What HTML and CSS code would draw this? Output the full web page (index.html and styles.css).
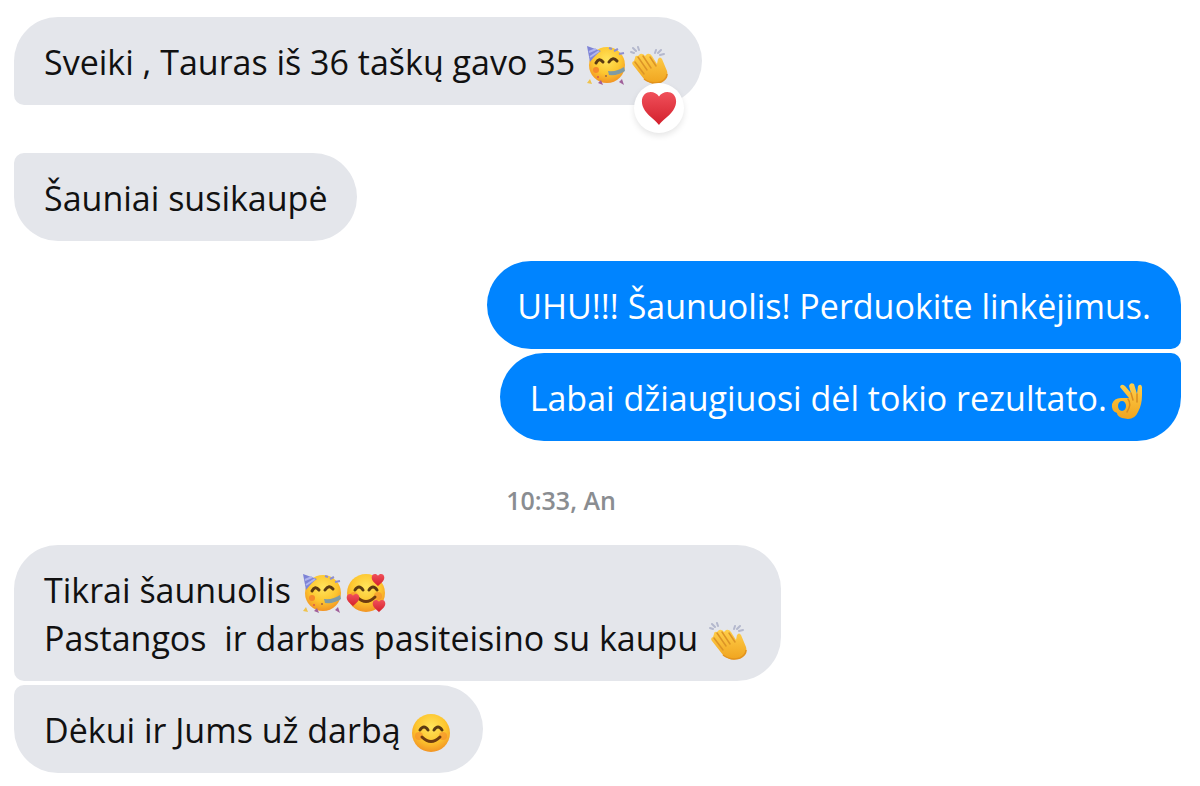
FILE: index.html
```
<!DOCTYPE html>
<html lang="lt">
<head>
    <meta charset="UTF-8">
    <meta name="viewport" content="width=device-width, initial-scale=1.0">
    <title>Žinutės</title>
    <link rel="stylesheet" href="styles.css">
</head>
<body>

<svg class="sprite" aria-hidden="true">
    <defs>
        <radialGradient id="face" cx="50%" cy="35%" r="65%">
            <stop offset="0" stop-color="#ffe45c"/>
            <stop offset="0.6" stop-color="#fdc62f"/>
            <stop offset="1" stop-color="#f29423"/>
        </radialGradient>
        <linearGradient id="hand" x1="0" y1="0" x2="0" y2="1">
            <stop offset="0" stop-color="#ffcf4a"/>
            <stop offset="1" stop-color="#f0a41f"/>
        </linearGradient>
        <linearGradient id="red" x1="0" y1="0" x2="0" y2="1">
            <stop offset="0" stop-color="#f0505a"/>
            <stop offset="1" stop-color="#d3202c"/>
        </linearGradient>
    </defs>

    <symbol id="party" viewBox="0 0 40 40">
        <circle cx="21" cy="20" r="18" fill="url(#face)"/>
        <path d="M1 1 L15 6 Q10 9 4 17 Z" fill="#7d83d6"/>
        <path d="M3 7 L10 4 M4 12 L13 6" stroke="#b0b5ee" stroke-width="2"/>
        <path d="M10 18 Q13 12 17 17 M23 17 Q27 11 31 16" fill="none" stroke="#5b3a12" stroke-width="3" stroke-linecap="round"/>
        <circle cx="10" cy="25" r="3" fill="#f58a2c"/>
        <path d="M22 26 Q31 27 38 22 L39 26 Q32 31 23 30 Z" fill="#7f9ba5"/>
        <path d="M28 6 l4 -2 M33 9 l5 -1 M23 3 l3 1" stroke="#8e8fd0" stroke-width="2"/>
        <path d="M1 38 l3 -4 2 5z" fill="#efc34d"/>
        <path d="M12 38 l3 -3 2 5z M33 37 l3 -3 2 6z" fill="#a0609a"/>
        <circle cx="12" cy="32" r="1" fill="#d8574e"/>
        <circle cx="20" cy="31" r="1" fill="#a06442"/>
    </symbol>

    <symbol id="clap" viewBox="0 0 40 40">
        <path d="M3 20 Q1 17 4 16 L5 13 Q5 10 8 11 L10 9 Q13 8 15 11 L17 9 Q20 8 22 11 L27 19 L28 14 Q30 11 32 14 L37 26 Q39 34 31 37 Q22 41 14 34 Z" fill="url(#hand)"/>
        <path d="M8 12 L17 25 M13 11 L21 23 M5 17 L14 29 M20 12 L26 21" fill="none" stroke="#dc9426" stroke-width="1.5" stroke-linecap="round"/>
        <path d="M14 34 Q22 40 31 37 Q37 34 37 29" fill="none" stroke="#e3931d" stroke-width="1.5"/>
        <path d="M1 7 l3 1 M3 3 l3 3 M8 2 l1 3 M26 5 l-1 3 M31 5 l-3 3 M34 9 l-4 1" stroke="#b4b8cd" stroke-width="2" stroke-linecap="round"/>
    </symbol>

    <symbol id="smile" viewBox="0 0 40 40">
        <circle cx="20" cy="20" r="19" fill="url(#face)"/>
        <circle cx="8" cy="23" r="4" fill="#f58a2c" opacity="0.6"/>
        <circle cx="32" cy="23" r="4" fill="#f58a2c" opacity="0.6"/>
        <path d="M9 17 Q13 11 17 17 M23 17 Q27 11 31 17" fill="none" stroke="#5b3a12" stroke-width="3" stroke-linecap="round"/>
        <path d="M11 24 Q20 33 29 24" fill="none" stroke="#6e3b10" stroke-width="3" stroke-linecap="round"/>
    </symbol>

    <symbol id="heart" viewBox="0 0 40 40">
        <path d="M20 38 C15 31 2 25 2 13 C2 2 15 0 20 8 C25 0 38 2 38 13 C38 25 25 31 20 38 Z" fill="url(#red)"/>
    </symbol>

    <symbol id="loved" viewBox="0 0 40 40">
        <use href="#smile"/>
        <use href="#heart" x="25" y="0" width="14" height="14"/>
        <use href="#heart" x="0" y="20" width="14" height="14"/>
        <use href="#heart" x="26" y="26" width="14" height="14"/>
    </symbol>

    <!-- the hole in the hand takes the colour of the sent bubble -->
    <symbol id="ok" viewBox="0 0 40 40">
        <path d="M11 6 Q12 2 16 5 L22 12 L20 5 Q21 1 25 3 L28 13 L29 5 Q32 2 33 6 L33 14 Q33 24 29 31 Q26 38 19 38 L13 37 Q8 35 8 32 Q2 30 3 23 Q5 17 12 17 L20 17 Z" fill="url(#hand)"/>
        <ellipse cx="13" cy="25" rx="4" ry="5" fill="#0084ff"/>
        <path d="M19 18 Q23 23 18 31 M22 12 L24 19 M28 13 L28 21" fill="none" stroke="#d88c20" stroke-width="1.5" stroke-linecap="round"/>
    </symbol>
</svg>

<main class="chat">
    <div class="message received first">
        Sveiki , Tauras iš 36 taškų gavo 35
        <svg class="emoji" role="img" aria-label="šventė"><use href="#party"/></svg><svg class="emoji" role="img" aria-label="plojimai"><use href="#clap"/></svg>
        <span class="reaction"><svg role="img" aria-label="širdelė"><use href="#heart"/></svg></span>
    </div>
    <div class="message received last after-reaction">Šauniai susikaupė</div>

    <div class="message sent first new-group">UHU!!! Šaunuolis! Perduokite linkėjimus.</div>
    <div class="message sent last">Labai džiaugiuosi dėl tokio rezultato.<svg class="emoji" role="img" aria-label="puiku"><use href="#ok"/></svg></div>

    <time class="time">10:33, An</time>

    <div class="message received first">Tikrai šaunuolis <svg class="emoji" role="img" aria-label="šventė"><use href="#party"/></svg><svg class="emoji" role="img" aria-label="meilė"><use href="#loved"/></svg><br>Pastangos&nbsp; ir darbas pasiteisino su kaupu <svg class="emoji" role="img" aria-label="plojimai"><use href="#clap"/></svg></div>
    <div class="message received last">Dėkui ir Jums už darbą <svg class="emoji" role="img" aria-label="šypsena"><use href="#smile"/></svg></div>
</main>

</body>
</html>
```

FILE: styles.css
```
body {
    margin: 0;
    background: white;
    font-family: "Open Sans", "Noto Sans", sans-serif;
}
.sprite {
    position: absolute;
    width: 0;
    height: 0;
}
.chat {
    display: flex;
    flex-direction: column;
    gap: 4px;
    padding: 17px 19px 12px 14px;
}
.message {
    position: relative;
    box-sizing: border-box;
    max-width: 80%;
    padding: 21px 30px 19px;
    border-radius: 44px;
    font-size: 34px;
    line-height: 48px;
}
.received {
    align-self: flex-start;
    background: #e4e6eb;
    color: #111;
}
.sent {
    align-self: flex-end;
    background: #0084ff;
    color: white;
}
.received.first {
    border-bottom-left-radius: 10px;
}
.received.last {
    border-top-left-radius: 10px;
}
.sent.first {
    border-bottom-right-radius: 10px;
}
.sent.last {
    border-top-right-radius: 10px;
}
.after-reaction {
    margin-top: 44px;
}
.new-group {
    margin-top: 16px;
}
.emoji {
    width: 40px;
    height: 40px;
    margin: 0 2px;
    vertical-align: -10px;
}
.reaction {
    position: absolute;
    right: 18px;
    bottom: -28px;
    display: flex;
    align-items: center;
    justify-content: center;
    width: 50px;
    height: 50px;
    border-radius: 50%;
    background: white;
    box-shadow: 0 3px 6px rgba(0, 0, 0, 0.1);
}
.reaction svg {
    width: 38px;
    height: 38px;
}
.time {
    margin: 40px 0 26px;
    padding-right: 73px;
    text-align: center;
    color: #8a8d91;
    font-size: 25px;
    font-weight: 600;
    line-height: 30px;
}
```
